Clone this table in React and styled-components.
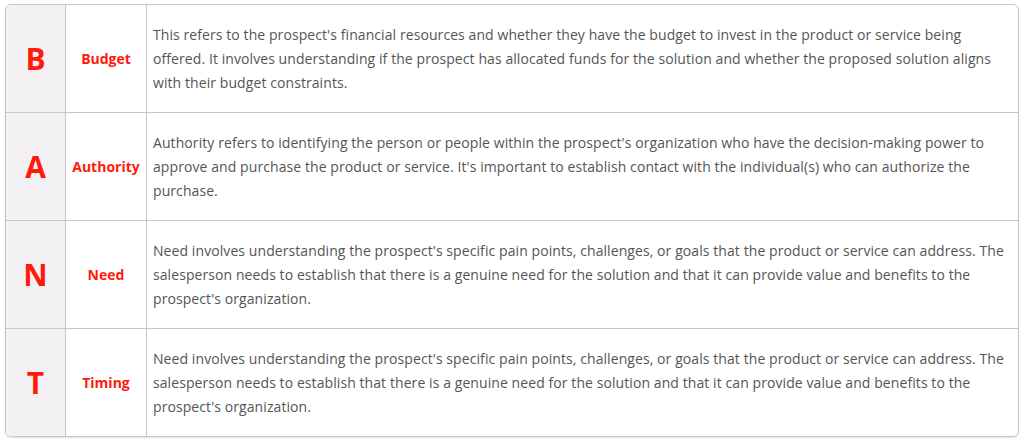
import React from "react";
import styled, { createGlobalStyle } from "styled-components";

const GlobalStyle = createGlobalStyle`
  body {
    margin: 0;
    background: #ffffff;
    font-family: "Open Sans", "Liberation Sans", sans-serif;
  }
`;

const Page = styled.div`
  padding: 4px 6px 6px 5px;
`;

const Table = styled.div`
  display: grid;
  grid-template-columns: 59px 81px 1fr;
  border: 1px solid #c6c6c6;
  border-radius: 6px;
  overflow: hidden;
  box-shadow: 0 1px 2px rgba(0, 0, 0, 0.12);
`;

const Cell = styled.div`
  display: flex;
  align-items: center;
  box-sizing: border-box;
  border-top: ${(p) => (p.$first ? "none" : "1px solid #c6c6c6")};
  border-left: ${(p) => (p.$lead ? "none" : "1px solid #c6c6c6")};
`;

const LetterCell = styled(Cell)`
  justify-content: center;
  background: #f3f1f4;
  color: #ff1a0c;
  font-size: 30px;
  font-weight: 700;
`;

const LabelCell = styled(Cell)`
  justify-content: center;
  color: #ff1a0c;
  font-size: 14px;
  font-weight: 700;
`;

const TextCell = styled(Cell)`
  padding: 18px 9px 17px 6px;
  color: #555555;
  font-size: 14px;
  letter-spacing: 0.08px;
  line-height: 24px;
`;

const rows = [
  {
    letter: "B",
    label: "Budget",
    text: "This refers to the prospect's financial resources and whether they have the budget to invest in the product or service being offered. It involves understanding if the prospect has allocated funds for the solution and whether the proposed solution aligns with their budget constraints.",
  },
  {
    letter: "A",
    label: "Authority",
    text: "Authority refers to identifying the person or people within the prospect's organization who have the decision-making power to approve and purchase the product or service. It's important to establish contact with the individual(s) who can authorize the purchase.",
  },
  {
    letter: "N",
    label: "Need",
    text: "Need involves understanding the prospect's specific pain points, challenges, or goals that the product or service can address. The salesperson needs to establish that there is a genuine need for the solution and that it can provide value and benefits to the prospect's organization.",
  },
  {
    letter: "T",
    label: "Timing",
    text: "Need involves understanding the prospect's specific pain points, challenges, or goals that the product or service can address. The salesperson needs to establish that there is a genuine need for the solution and that it can provide value and benefits to the prospect's organization.",
  },
];

export default function App() {
  return (
    <Page>
      <GlobalStyle />
      <Table>
        {rows.map((row, i) => (
          <React.Fragment key={row.letter}>
            <LetterCell $first={i === 0} $lead>
              {row.letter}
            </LetterCell>
            <LabelCell $first={i === 0}>{row.label}</LabelCell>
            <TextCell $first={i === 0}>{row.text}</TextCell>
          </React.Fragment>
        ))}
      </Table>
    </Page>
  );
}
